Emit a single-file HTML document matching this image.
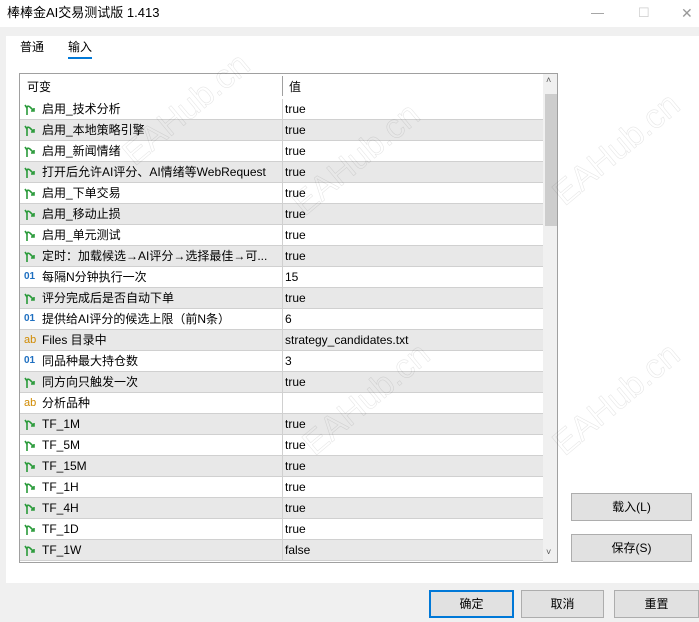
<!DOCTYPE html>
<html style="overflow:hidden;width:699px;height:622px"><head><meta charset="utf-8"><style>
*{margin:0;padding:0;box-sizing:border-box}
body{width:699px;height:622px;background:#f0f0f0;font-family:"Liberation Sans","Noto Sans CJK SC",sans-serif;font-size:12px;color:#000;position:relative;overflow:hidden}
.abs{position:absolute}
.title{left:0;top:0;width:699px;height:27px;background:#fff;}
.title span{position:absolute;left:7px;top:0;line-height:26px;font-size:13px}
.panel{left:6px;top:36px;width:693px;height:547px;background:#fff}
.tab{top:38px;font-size:12px;line-height:18px}
.tbl{left:19px;top:73px;width:539px;height:490px;border:1px solid #a0a0a0;background:#fff;overflow:hidden}
.row{position:absolute;left:0;width:523px;height:21px;border-bottom:1px solid #d0d0d0;line-height:20px}
.row.g{background:#e8e8e8}
.row .n{position:absolute;left:22px;top:0;height:20px;white-space:nowrap;width:240px;overflow:hidden}
.row .v{position:absolute;left:265px;top:0;white-space:nowrap}
.row .d{position:absolute;left:262px;top:0;width:1px;height:21px;background:#d0d0d0}
.ic{position:absolute;left:4px;top:3px;width:14px;height:14px;font-size:11px}
.i01{color:#1e6fc0;font-weight:bold;font-size:10px;top:0;line-height:20px}
.iab{color:#d08a00;font-size:11px;top:0;line-height:20px}
.btn{position:absolute;background:#e1e1e1;border:1px solid #adadad;text-align:center;font-size:12px}
.wm{position:absolute;font-size:34px;transform:rotate(-40deg);font-family:"Liberation Sans",sans-serif;-webkit-text-stroke:0.6px rgba(0,0,0,0.1);color:transparent}
</style></head><body>
<div class="abs title"><span>棒棒金AI交易测试版 1.413</span>
<span style="left:591px;color:#999">—</span><span style="left:638px;color:#ccc">☐</span><span style="left:681px;color:#999;font-size:14px">✕</span></div>
<div class="abs panel"></div>
<div class="abs tab" style="left:20px">普通</div>
<div class="abs tab" style="left:68px">输入</div>
<div class="abs" style="left:68px;top:57px;width:24px;height:2px;background:#0078d7"></div>
<div class="abs tbl">
<div class="abs" style="left:0;top:0;width:523px;height:25px;background:#fff"></div>
<div class="abs" style="left:7px;top:3px;line-height:20px">可变</div>
<div class="abs" style="left:262px;top:2px;width:1px;height:20px;background:#a0a0a0"></div>
<div class="abs" style="left:269px;top:3px;line-height:20px">值</div>
<div id="rows"></div>
<div class="abs" style="left:523px;top:0;width:15px;height:488px;background:#f0f0f0"></div>
<div class="abs" style="left:525px;top:20px;width:12px;height:132px;background:#cdcdcd"></div>
<div class="abs" style="left:526px;top:1px;font-size:9px;color:#555">˄</div>
<div class="abs" style="left:526px;top:473px;font-size:9px;color:#555">˅</div>
</div>
<div class="btn" style="left:571px;top:493px;width:121px;height:28px;line-height:26px">载入(L)</div>
<div class="btn" style="left:571px;top:534px;width:121px;height:28px;line-height:26px">保存(S)</div>
<div class="btn" style="left:429px;top:590px;width:85px;height:28px;line-height:24px;border:2px solid #0078d7">确定</div>
<div class="btn" style="left:521px;top:590px;width:83px;height:28px;line-height:26px">取消</div>
<div class="btn" style="left:614px;top:590px;width:85px;height:28px;line-height:26px">重置</div>
<div class="wm" style="left:110px;top:90px">EAHub.cn</div>
<div class="wm" style="left:280px;top:140px">EAHub.cn</div>
<div class="wm" style="left:540px;top:130px">EAHub.cn</div>
<div class="wm" style="left:290px;top:380px">EAHub.cn</div>
<div class="wm" style="left:540px;top:380px">EAHub.cn</div>
<script>
var d=[["b","启用_技术分析","true"],["b","启用_本地策略引擎","true"],["b","启用_新闻情绪","true"],["b","打开后允许AI评分、AI情绪等WebRequest","true"],["b","启用_下单交易","true"],["b","启用_移动止损","true"],["b","启用_单元测试","true"],["b","定时：加载候选→AI评分→选择最佳→可...","true"],["i","每隔N分钟执行一次","15"],["b","评分完成后是否自动下单","true"],["i","提供给AI评分的候选上限（前N条）","6"],["s","Files 目录中","strategy_candidates.txt"],["i","同品种最大持仓数","3"],["b","同方向只触发一次","true"],["s","分析品种",""],["b","TF_1M","true"],["b","TF_5M","true"],["b","TF_15M","true"],["b","TF_1H","true"],["b","TF_4H","true"],["b","TF_1D","true"],["b","TF_1W","false"]];
var h="";
var arrow='<svg class="ic" viewBox="0 0 14 14"><path d="M3 13 L3 6 Q3 3 6 5 L9 8 M7 9 L10 9 L10 6" stroke="#2a9a3a" stroke-width="1.6" fill="none"/><path d="M3 6 L1 3" stroke="#2a9a3a" stroke-width="1.6"/></svg>';
d.forEach(function(r,i){
var ic=r[0]=="b"?arrow:(r[0]=="i"?'<span class="ic i01">01</span>':'<span class="ic iab">ab</span>');
h+='<div class="row'+(i%2?' g':'')+'" style="top:'+(25+i*21)+'px">'+ic+'<span class="n">'+r[1]+'</span><span class="d"></span><span class="v">'+r[2]+'</span></div>';});
document.getElementById("rows").innerHTML=h;
</script>
</body></html>
